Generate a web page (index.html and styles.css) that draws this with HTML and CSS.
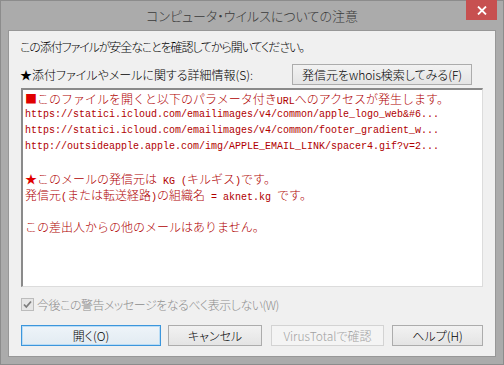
FILE: index.html
```html
<!DOCTYPE html>
<html lang="ja">
<head>
<meta charset="utf-8">
<link rel="stylesheet" href="styles.css">
</head>
<body>
<div class="window">
  <div class="titlebar">
    <span class="title">コンピュータ・ウイルスについての注意</span>
    <div class="close"><svg width="10" height="9" viewBox="0 0 10 9"><path d="M1 0.5 L9 8.5 M9 0.5 L1 8.5" stroke="#fff" stroke-width="1.8" fill="none"/></svg></div>
  </div>
  <div class="client">
    <div class="msg">この添付ファイルが安全なことを確認してから開いてください。</div>
    <div class="row2">
      <span class="label">★添付ファイルやメールに関する詳細情報(S):</span>
      <button class="btn whois">発信元をwhois検索してみる(F)</button>
    </div>
    <div class="details">
      <div class="line"><span class="sym">■</span>このファイルを開くと以下のパラメータ付き<span class="m">URL</span>へのアクセスが発生します。</div>
      <div class="line m">https://statici.icloud.com/emailimages/v4/common/apple_logo_web&amp;#6...</div>
      <div class="line m">https://statici.icloud.com/emailimages/v4/common/footer_gradient_w...</div>
      <div class="line m">http://outsideapple.apple.com/img/APPLE_EMAIL_LINK/spacer4.gif?v=2...</div>
      <div class="line"> </div>
      <div class="line"><span class="sym">★</span>このメールの発信元は<span class="m"> KG (</span>キルギス<span class="m">)</span>です。</div>
      <div class="line">発信元<span class="m">(</span>または転送経路<span class="m">)</span>の組織名<span class="m"> = aknet.kg </span>です。</div>
      <div class="line"> </div>
      <div class="line">この差出人からの他のメールはありません。</div>
    </div>
    <div class="checkrow">
      <span class="checkbox"><svg width="11" height="11" viewBox="0 0 11 11"><path d="M2 5.5 L4.3 8 L9 2.5" stroke="#7d7d7d" stroke-width="1.8" fill="none"/></svg></span>
      <span class="checklabel">今後この警告メッセージをなるべく表示しない(W)</span>
    </div>
    <div class="buttons">
      <button class="btn default b-open">開く(O)</button>
      <button class="btn b-cancel">キャンセル</button>
      <button class="btn disabled b-vt">VirusTotalで確認</button>
      <button class="btn b-help">ヘルプ(H)</button>
    </div>
  </div>
</div>
</body>
</html>
```
FILE: styles.css
```css
html, body {
  margin: 0;
  padding: 0;
  background: #aaaaaa;
}
body {
  width: 504px;
  height: 365px;
  overflow: hidden;
  font-family: "Noto Sans CJK JP", "Noto Sans", sans-serif;
}
.window {
  position: relative;
  width: 504px;
  height: 365px;
  box-sizing: border-box;
  background: #ababab;
  box-shadow: inset 0 0 0 1px #8c8c8c;
  padding: 0 8px 8px 8px;
  display: flex;
  flex-direction: column;
}
.titlebar {
  height: 30px;
  flex: none;
  display: flex;
  align-items: center;
  justify-content: center;
}
.title {
  font-size: 13px;
  color: #3a3a3a;
  font-feature-settings: "palt";
  letter-spacing: 0;
  line-height: 16px;
  margin-top: 2px;
  font-weight: 300;
}
.close {
  position: absolute;
  top: 0;
  right: 7px;
  width: 31px;
  height: 20px;
  background: #c75050;
  display: flex;
  align-items: center;
  justify-content: center;
}
.client {
  flex: 1;
  background: #f0f0f0;
  border: 1px solid #979797;
  padding: 8px 12px 10px 11px;
  display: flex;
  flex-direction: column;
  font-size: 12px;
  color: #000;
}
.msg, .label, .checklabel, .btn {
  font-feature-settings: "palt";
  font-family: "Noto Sans CJK JP", "Noto Sans", sans-serif;
  font-size: 12px;
  font-weight: 300;
}
.msg {
  line-height: 16px;
  height: 16px;
  letter-spacing: -1.1px;
}
.row2 {
  margin-top: 9px;
  height: 21px;
  display: flex;
  align-items: center;
  justify-content: space-between;
}
.label {
  line-height: 16px;
}
.btn {
  box-sizing: border-box;
  height: 21px;
  margin: 0;
  padding: 0;
  border: 1px solid #acacac;
  background: linear-gradient(#f2f2f2, #e4e4e4);
  color: #000;
  line-height: 18px;
  border-radius: 0;
}
.whois {
  width: 180px;
  margin-right: 11px;
}
.details {
  margin-top: 3px;
  margin-left: 1px;
  height: 199px;
  box-sizing: border-box;
  background: #fff;
  border-top: 2px solid #8a8a8a;
  border-left: 2px solid #8a8a8a;
  border-right: 1px solid #dcdcdc;
  border-bottom: 1px solid #dcdcdc;
  padding: 1px 2px 0 2px;
  color: #b00000;
  font-size: 12px;
  font-weight: 300;
  overflow: hidden;
}
.line {
  height: 16px;
  line-height: 16px;
  white-space: pre;
  overflow: hidden;
}
.m {
  font-family: "Liberation Mono", monospace;
  font-size: 10px;
  font-weight: 400;
}
.sym {
  color: #e00000;
}
.checkrow {
  margin-top: 11px;
  margin-left: 1px;
  height: 13px;
  display: flex;
  align-items: center;
}
.checkbox {
  width: 13px;
  height: 13px;
  box-sizing: border-box;
  border: 1px solid #bcbcbc;
  background: #e6e6e6;
  display: flex;
  align-items: center;
  justify-content: center;
}
.checklabel {
  margin-left: 3px;
  color: #8d8d8d;
  line-height: 16px;
  letter-spacing: -0.5px;
}
.buttons {
  margin-top: 14px;
  margin-left: 1px;
  display: flex;
  height: 21px;
}
.default {
  border-color: #3c96dc;
  box-shadow: inset 0 0 0 1px #b9dcf5;
  background: linear-gradient(#eef4f9, #e2ebf2);
}
.disabled {
  border-color: #d3d3d3;
  background: #f4f4f4;
  color: #a2a2a2;
}
.b-open { width: 140px; }
.b-cancel { width: 94px; margin-left: 7px; }
.b-vt { width: 113px; margin-left: 9px; }
.b-help { width: 91px; margin-left: 8px; }
```
